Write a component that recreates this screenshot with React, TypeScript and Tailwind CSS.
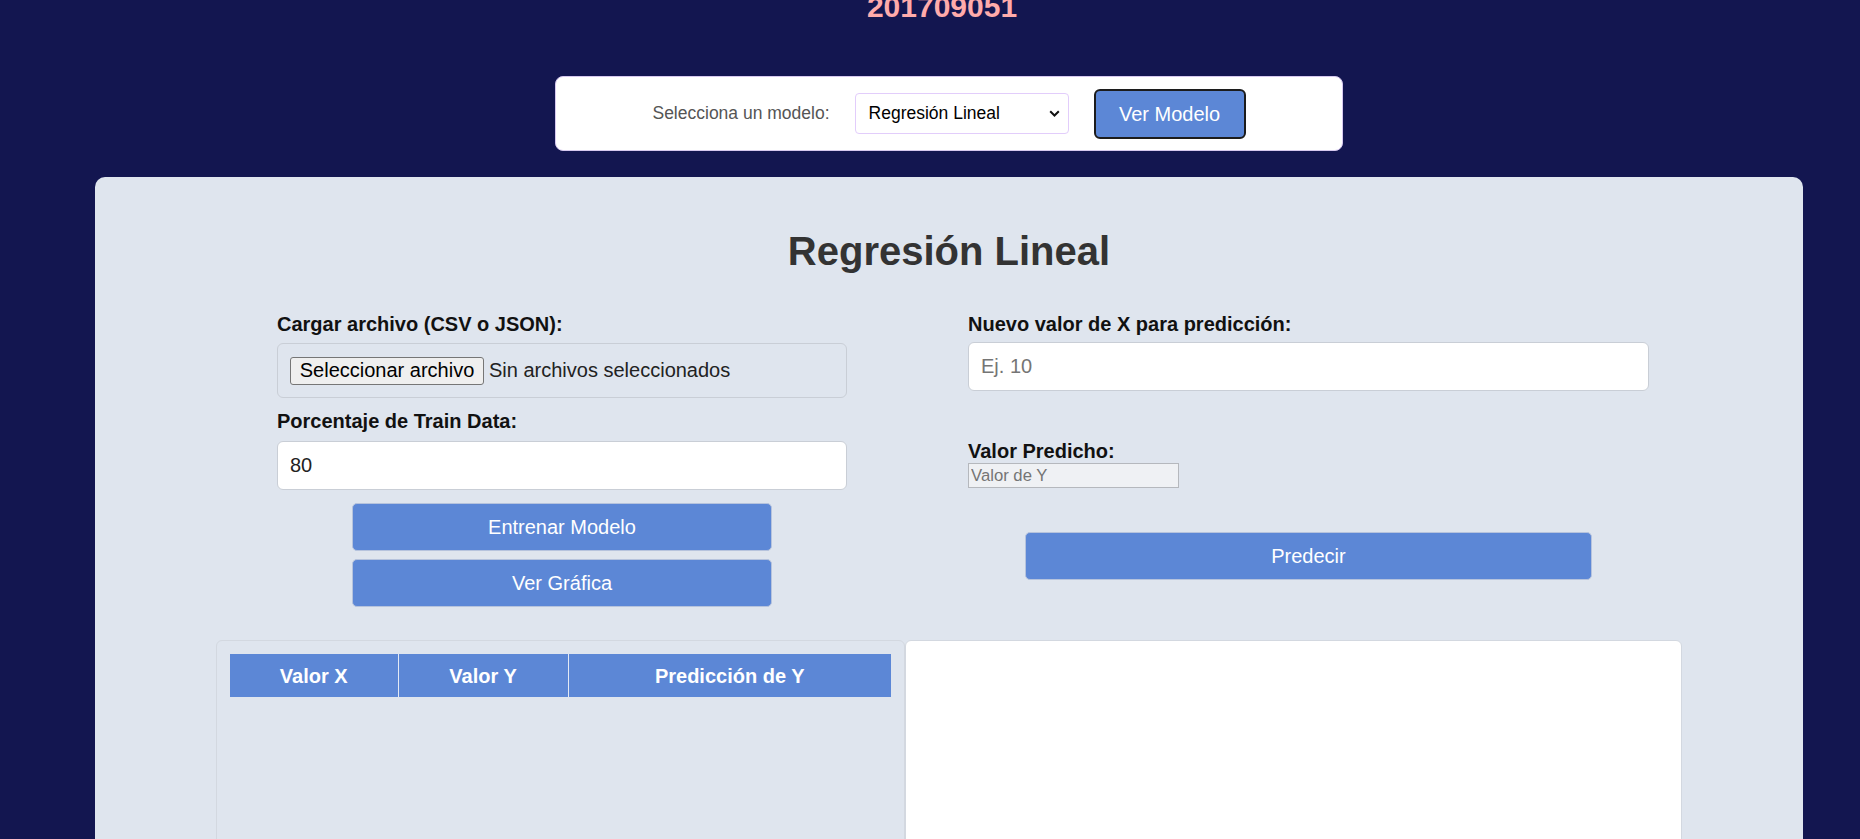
export default function App() {
  return (
    <div className="h-[839px] w-[1860px] overflow-hidden bg-[#131650] font-['Liberation_Sans',Arial,sans-serif]">
      <div className="ml-[95px] w-[1708px]">
        <div className="mt-[-10px] pr-[14px] text-center text-[30px] font-bold leading-[34px] text-[#ffabab]">
          201709051
        </div>

        <div className="mx-auto mt-[52px] flex h-[75px] w-[788px] items-center justify-center gap-[25px] rounded-[8px] border border-[#d6c8ef] bg-white">
          <span className="text-[17.5px] text-[#555]">Selecciona un modelo:</span>
          <div className="flex h-[41px] w-[214px] items-center justify-between rounded-[4px] border border-[#e2cdfb] bg-white pl-[13px] pr-[8px] text-[17.5px] text-black">
            <span>Regresión Lineal</span>
            <svg width="11" height="7" viewBox="0 0 11 7" fill="none">
              <path d="M1.2 1.2 L5.5 5.5 L9.8 1.2" stroke="#111" strokeWidth="2" />
            </svg>
          </div>
          <button className="h-[50px] w-[152px] rounded-[6px] border-2 border-[#1c1c1c] bg-[#5c87d6] text-[20px] text-white">
            Ver Modelo
          </button>
        </div>

        <div className="mt-[26px] h-[800px] rounded-[10px] bg-[#dfe5ee] pt-[51px]">
          <h1 className="text-center text-[40px] font-bold leading-[46px] text-[#333]">Regresión Lineal</h1>

          <div className="mt-[39px] flex gap-[121px] pl-[182px]">
            <div className="flex w-[570px] flex-col">
              <label className="text-[20px] font-bold leading-[23px] text-[#111]">Cargar archivo (CSV o JSON):</label>
              <div className="mt-[7px] flex h-[55px] items-center rounded-[6px] border border-[#c9ced6] px-[12px] text-[20px] leading-[23px] text-[#222]">
                <span className="flex h-[28px] w-[194px] items-center justify-center rounded-[3px] border border-[#767676] bg-[#efefef] text-black">
                  Seleccionar archivo
                </span>
                <span className="ml-[5px]">Sin archivos seleccionados</span>
              </div>
              <label className="mt-[12px] text-[20px] font-bold leading-[23px] text-[#111]">Porcentaje de Train Data:</label>
              <input
                defaultValue="80"
                className="mt-[8px] h-[49px] w-full rounded-[6px] border border-[#c9ced6] bg-white px-[12px] text-[20px] text-[#222] outline-none"
              />
              <div className="mt-[13px] flex flex-col items-center gap-[8px]">
                <button className="h-[48px] w-[420px] rounded-[5px] border border-[#b6c3dd] bg-[#5c87d6] text-[20px] text-white">
                  Entrenar Modelo
                </button>
                <button className="h-[48px] w-[420px] rounded-[5px] border border-[#b6c3dd] bg-[#5c87d6] text-[20px] text-white">
                  Ver Gráfica
                </button>
              </div>
            </div>

            <div className="flex w-[681px] flex-col">
              <label className="text-[20px] font-bold leading-[23px] text-[#111]">Nuevo valor de X para predicción:</label>
              <input
                placeholder="Ej. 10"
                className="mt-[6px] h-[49px] w-full rounded-[6px] border border-[#c9ced6] bg-white px-[12px] text-[20px] text-[#222] outline-none placeholder:text-[#757575]"
              />
              <label className="mt-[49px] text-[20px] font-bold leading-[23px] text-[#111]">Valor Predicho:</label>
              <input
                readOnly
                placeholder="Valor de Y"
                className="h-[25px] w-[211px] border border-[#b5b8bd] bg-[#eff1f4] px-[2px] text-[16.7px] text-[#222] outline-none placeholder:text-[#757575]"
              />
              <button className="mt-[44px] h-[48px] w-[567px] self-center rounded-[5px] border border-[#b6c3dd] bg-[#5c87d6] text-[20px] text-white">
                Predecir
              </button>
            </div>
          </div>

          <div className="ml-[121px] mt-[33px] flex w-[1466px]">
            <div className="h-[400px] w-[689px] rounded-[6px] border border-[#d3d8e0] p-[13px]">
              <table className="w-full table-fixed border-collapse">
                <colgroup>
                  <col className="w-[168px]" />
                  <col className="w-[170px]" />
                  <col />
                </colgroup>
                <thead>
                  <tr className="h-[43px] bg-[#5c87d6] text-[20px] font-bold text-white">
                    <th className="border-r border-[#e3e9f5] text-center">Valor X</th>
                    <th className="border-r border-[#e3e9f5] text-center">Valor Y</th>
                    <th className="text-center">Predicción de Y</th>
                  </tr>
                </thead>
              </table>
            </div>
            <div className="h-[400px] w-[777px] rounded-[6px] border border-[#d3d8e0] bg-white" />
          </div>
        </div>
      </div>
    </div>
  );
}
